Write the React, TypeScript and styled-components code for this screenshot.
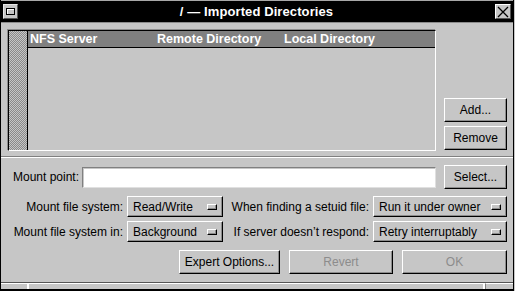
import React from 'react';
import styled, { createGlobalStyle } from 'styled-components';

const GlobalStyle = createGlobalStyle`
  html, body {
    margin: 0;
    padding: 0;
    background: #c6c6c6;
  }
  body {
    font-family: "Liberation Sans", Helvetica, Arial, sans-serif;
    font-size: 12px;
    color: #000;
  }
`;

const columns = ['NFS Server', 'Remote Directory', 'Local Directory'];

function App() {
  return (
    <>
      <GlobalStyle />
      <Window>
        <TitleBar>
          <MenuButton>
            <MenuGlyph />
          </MenuButton>
          <Title>/ — Imported Directories</Title>
          <CloseButton>
            <svg width="12" height="12" viewBox="0 0 12 12">
              <path d="M1 1 L11 11 M11 1 L1 11" stroke="#000" strokeWidth="1.3" fill="none" />
            </svg>
          </CloseButton>
        </TitleBar>

        <TopSection>
          <ListFrame>
            <Sash />
            <ListPane>
              <ListHeader>
                {columns.map((c) => (
                  <HeaderCell key={c}>{c}</HeaderCell>
                ))}
              </ListHeader>
            </ListPane>
          </ListFrame>
          <SideButtons>
            <Button>Add...</Button>
            <Button>Remove</Button>
          </SideButtons>
        </TopSection>

        <Separator />

        <MountRow>
          <Label>Mount point:</Label>
          <TextField />
          <Button $width={63}>Select...</Button>
        </MountRow>

        <OptionsGrid>
          <Label>Mount file system:</Label>
          <OptionMenu>
            Read/Write
            <OptionGlyph />
          </OptionMenu>
          <Label>When finding a setuid file:</Label>
          <OptionMenu>
            Run it under owner
            <OptionGlyph />
          </OptionMenu>
          <Label>Mount file system in:</Label>
          <OptionMenu>
            Background
            <OptionGlyph />
          </OptionMenu>
          <Label>If server doesn’t respond:</Label>
          <OptionMenu>
            Retry interruptably
            <OptionGlyph />
          </OptionMenu>
        </OptionsGrid>

        <ActionRow>
          <Button $width={101}>Expert Options...</Button>
          <Button $width={104} disabled>
            Revert
          </Button>
          <Button $width={105} disabled>
            OK
          </Button>
        </ActionRow>

        <StatusBar>
          <StatusCell />
          <StatusCell />
          <StatusCell />
        </StatusBar>
      </Window>
    </>
  );
}

const Window = styled.div`
  width: 514px;
  height: 291px;
  box-sizing: border-box;
  display: flex;
  flex-direction: column;
  background: #c6c6c6;
  border-left: 1px solid #000;
  border-right: 1px solid #000;
  border-bottom: 1px solid #000;
`;

const TitleBar = styled.div`
  height: 21px;
  display: flex;
  align-items: center;
  padding: 0 2px;
  background: #000;
  border-top: 1px solid #a8a8a8;
  border-bottom: 1px solid #8c8c8c;
`;

const MenuButton = styled.div`
  width: 15px;
  height: 15px;
  box-sizing: border-box;
  display: flex;
  align-items: center;
  justify-content: center;
  background: #c6c6c6;
  border: 1px solid #e8e8e8;
  border-right-color: #555;
  border-bottom-color: #555;
`;

const MenuGlyph = styled.div`
  width: 9px;
  height: 7px;
  box-sizing: border-box;
  background: #c6c6c6;
  border: 1px solid #000;
  box-shadow: inset 1px 1px 0 #fff;
`;

const Title = styled.div`
  flex: 1;
  text-align: center;
  color: #fff;
  font-weight: bold;
  font-size: 13px;
  letter-spacing: 0.1px;
`;

const CloseButton = styled.div`
  width: 16px;
  height: 15px;
  box-sizing: border-box;
  display: flex;
  align-items: center;
  justify-content: center;
  background: #c6c6c6;
  border: 1px solid #fff;
  border-right-color: #555;
  border-bottom-color: #555;
`;

const TopSection = styled.div`
  display: flex;
  align-items: flex-end;
  gap: 8px;
  padding: 7px 6px 0 7px;
`;

const ListFrame = styled.div`
  flex: 1;
  height: 121px;
  box-sizing: border-box;
  display: flex;
  border: 1px solid #000;
  border-right-color: #fff;
  border-bottom-color: #fff;
  box-shadow: -1px -1px 0 #8c8c8c;
`;

const Sash = styled.div`
  width: 18px;
  border-right: 1px solid #000;
  background: repeating-conic-gradient(#8a8a8a 0 25%, #c6c6c6 0 50%) 0 0 / 2px 2px;
`;

const ListPane = styled.div`
  flex: 1;
  background: #c6c6c6;
`;

const ListHeader = styled.div`
  display: grid;
  grid-template-columns: 127px 127px 1fr;
  height: 16px;
  padding-left: 2px;
  background: #808080;
  border-bottom: 1px solid #000;
`;

const HeaderCell = styled.div`
  color: #fff;
  font-weight: bold;
  font-size: 12.5px;
  line-height: 16px;
  white-space: nowrap;
`;

const SideButtons = styled.div`
  display: flex;
  flex-direction: column;
  gap: 4px;
  width: 63px;
  margin-bottom: 1px;
`;

const Button = styled.button<{ $width?: number }>`
  width: ${({ $width }) => ($width ? `${$width}px` : '100%')};
  height: 24px;
  box-sizing: border-box;
  padding: 0;
  background: #c6c6c6;
  font-family: inherit;
  font-size: 12px;
  color: #000;
  border: 1px solid #fff;
  border-right-color: #000;
  border-bottom-color: #000;
  box-shadow: inset -1px -1px 0 #8c8c8c;
  &:disabled {
    color: #8c8c8c;
  }
`;

const Separator = styled.div`
  margin-top: 5px;
  border-top: 1px solid #808080;
  border-bottom: 1px solid #fff;
`;

const MountRow = styled.div`
  display: flex;
  align-items: center;
  padding: 7px 6px 0 12px;
`;

const Label = styled.div`
  text-align: right;
  white-space: nowrap;
  font-size: 12px;
`;

const TextField = styled.div`
  flex: 1;
  height: 21px;
  margin: 0 8px 0 3px;
  box-sizing: border-box;
  background: #fff;
  border: 1px solid #808080;
  border-right-color: #e0e0e0;
  border-bottom-color: #e0e0e0;
  box-shadow: inset 1px 1px 0 #c6c6c6;
`;

const OptionsGrid = styled.div`
  display: grid;
  grid-template-columns: 110px 96px 1fr 134px;
  grid-auto-rows: 21px;
  column-gap: 4px;
  row-gap: 4px;
  align-items: center;
  padding: 7px 6px 0 12px;
`;

const OptionMenu = styled.div`
  height: 21px;
  box-sizing: border-box;
  display: flex;
  align-items: center;
  justify-content: space-between;
  padding: 0 5px 0 5px;
  font-size: 12px;
  white-space: nowrap;
  background: #c6c6c6;
  border: 1px solid #fff;
  border-right-color: #000;
  border-bottom-color: #000;
  box-shadow: inset -1px -1px 0 #8c8c8c;
`;

const OptionGlyph = styled.span`
  width: 10px;
  height: 6px;
  box-sizing: border-box;
  background: #c6c6c6;
  border: 1px solid #fff;
  border-right-color: #000;
  border-bottom-color: #000;
  box-shadow: inset -1px -1px 0 #8c8c8c;
`;

const ActionRow = styled.div`
  display: flex;
  justify-content: flex-end;
  gap: 9px;
  padding: 8px 6px 0 12px;
`;

const StatusBar = styled.div`
  margin-top: auto;
  display: grid;
  grid-template-columns: 28px 1fr 28px;
  height: 8px;
  box-sizing: border-box;
  border-top: 1px solid #555;
  border-bottom: 1px solid #000;
`;

const StatusCell = styled.div`
  border-top: 1px solid #fff;
  border-right: 2px solid #fff;
  &:last-child {
    border-right: none;
    border-left: 1px solid #808080;
  }
`;

export default App;
